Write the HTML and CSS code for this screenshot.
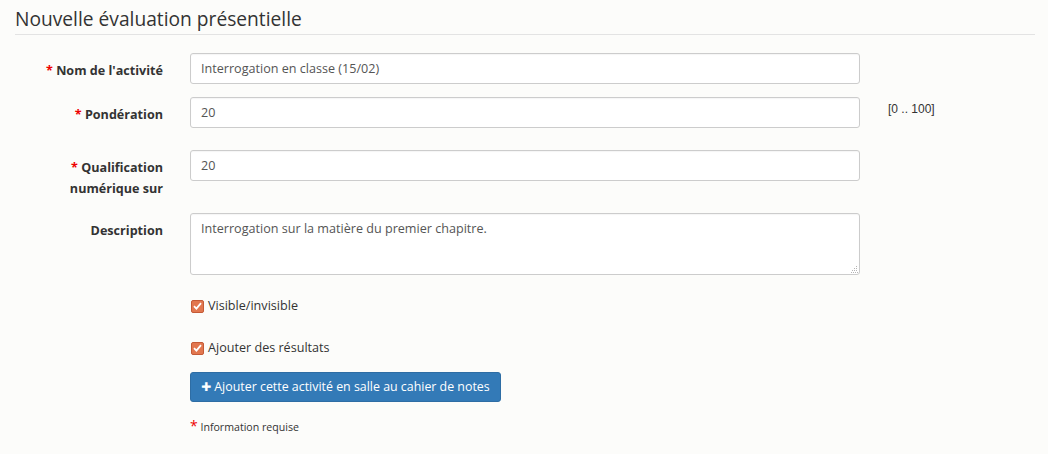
FILE: index.html
```html
<!DOCTYPE html>
<html lang="fr">
<head>
<meta charset="utf-8">
<title>Nouvelle évaluation présentielle</title>
<link rel="stylesheet" href="styles.css">
</head>
<body>
<div class="page">
  <h1 class="title">Nouvelle évaluation présentielle</h1>
  <form class="form">
    <div class="row row-1">
      <label class="label"><span class="req">*</span> Nom de l'activité</label>
      <div class="field"><div class="input">Interrogation en classe (15/02)</div></div>
      <div class="help"></div>
    </div>
    <div class="row row-2">
      <label class="label"><span class="req">*</span> Pondération</label>
      <div class="field"><div class="input">20</div></div>
      <div class="help">[0 .. 100]</div>
    </div>
    <div class="row row-3">
      <label class="label"><span class="req">*</span> Qualification numérique sur</label>
      <div class="field"><div class="input">20</div></div>
      <div class="help"></div>
    </div>
    <div class="row row-4">
      <label class="label">Description</label>
      <div class="field">
        <div class="input textarea">Interrogation sur la matière du premier chapitre.
          <svg class="grip" width="7" height="7" viewBox="0 0 7 7"><g fill="#b5b5b5"><rect x="5" y="0" width="1" height="1"/><rect x="3" y="2" width="1" height="1"/><rect x="5" y="2" width="1" height="1"/><rect x="1" y="4" width="1" height="1"/><rect x="3" y="4" width="1" height="1"/><rect x="5" y="4" width="1" height="1"/><rect x="0" y="6" width="1" height="1"/><rect x="2" y="6" width="1" height="1"/><rect x="4" y="6" width="1" height="1"/><rect x="6" y="6" width="1" height="1"/></g></svg>
        </div>
      </div>
      <div class="help"></div>
    </div>
    <div class="check check-1">
      <span class="box"><svg width="9" height="8" viewBox="0 0 9 8"><path d="M1 4.2 L3.4 6.6 L8 1.2" fill="none" stroke="#fff" stroke-width="1.8"/></svg></span>
      <span>Visible/invisible</span>
    </div>
    <div class="check check-2">
      <span class="box"><svg width="9" height="8" viewBox="0 0 9 8"><path d="M1 4.2 L3.4 6.6 L8 1.2" fill="none" stroke="#fff" stroke-width="1.8"/></svg></span>
      <span>Ajouter des résultats</span>
    </div>
    <div class="actions">
      <button type="button" class="btn"><span class="plus">&#x271A;</span> Ajouter cette activité en salle au cahier de notes</button>
    </div>
    <div class="note"><span class="req">*</span> Information requise</div>
  </form>
</div>
</body>
</html>
```

FILE: styles.css
```css
html, body {
  margin: 0;
  padding: 0;
  background: #fcfcfa;
}
body {
  font-family: "Open Sans", "Liberation Sans", sans-serif;
  font-size: 12.6px;
  color: #333;
}
.page {
  padding: 0 13px 0 15px;
}
.title {
  margin: 0;
  padding-top: 6px;
  font-size: 19.2px;
  font-weight: 400;
  line-height: 26px;
  color: #333;
  border-bottom: 1px solid #e3e3e3;
  padding-bottom: 2px;
}
.form {
  padding-top: 18px;
}
.row {
  display: grid;
  grid-template-columns: 148px 670px auto;
  column-gap: 27px;
  align-items: start;
}
.label {
  font-weight: 700;
  text-align: right;
  line-height: 21px;
  padding-top: 7px;
  padding-left: 26px;
}
.req {
  color: #e00;
}
.input {
  box-sizing: border-box;
  height: 31px;
  border: 1px solid #ccc;
  border-radius: 3px;
  background: #fff;
  padding: 6px 10px;
  line-height: 18px;
  color: #555;
  box-shadow: inset 0 1px 1px rgba(0,0,0,0.04);
}
.textarea {
  position: relative;
  height: 62px;
  padding-top: 6px;
}
.grip {
  position: absolute;
  right: 1px;
  bottom: 1px;
}
.help {
  font-family: "Liberation Sans", Arial, sans-serif;
  font-size: 12px;
  color: #333;
  padding-left: 1px;
  line-height: 18px;
  padding-top: 3px;
}
.row-1 { margin-bottom: 13px; }
.row-2 { margin-bottom: 22px; }
.row-3 { margin-bottom: 14px; }
.row-4 { margin-bottom: 22px; }
.check {
  display: flex;
  align-items: center;
  gap: 4px;
  margin-left: 175px;
  height: 18px;
  line-height: 18px;
}
.check-1 { margin-bottom: 24px; }
.check-2 { margin-bottom: 15px; }
.box {
  box-sizing: border-box;
  width: 13px;
  height: 13px;
  background: #e2774f;
  border: 1px solid #c45a36;
  border-radius: 2px;
  display: flex;
  align-items: center;
  justify-content: center;
  margin-left: 1px;
}
.box svg { display: block; }
.actions {
  margin-left: 175px;
}
.btn {
  font-family: "Open Sans", "Liberation Sans", sans-serif;
  font-size: 12.4px;
  color: #fff;
  background: #337ab7;
  border: 1px solid #2e6da4;
  border-radius: 3px;
  height: 30px;
  padding: 0 10px 0 10px;
  line-height: 28px;
  cursor: pointer;
}
.plus {
  font-size: 12px;
  font-family: "DejaVu Sans", sans-serif;
}
.note {
  margin-left: 175px;
  margin-top: 16px;
  font-size: 10.6px;
  line-height: 16px;
}
.note .req {
  font-size: 14px;
}
```
